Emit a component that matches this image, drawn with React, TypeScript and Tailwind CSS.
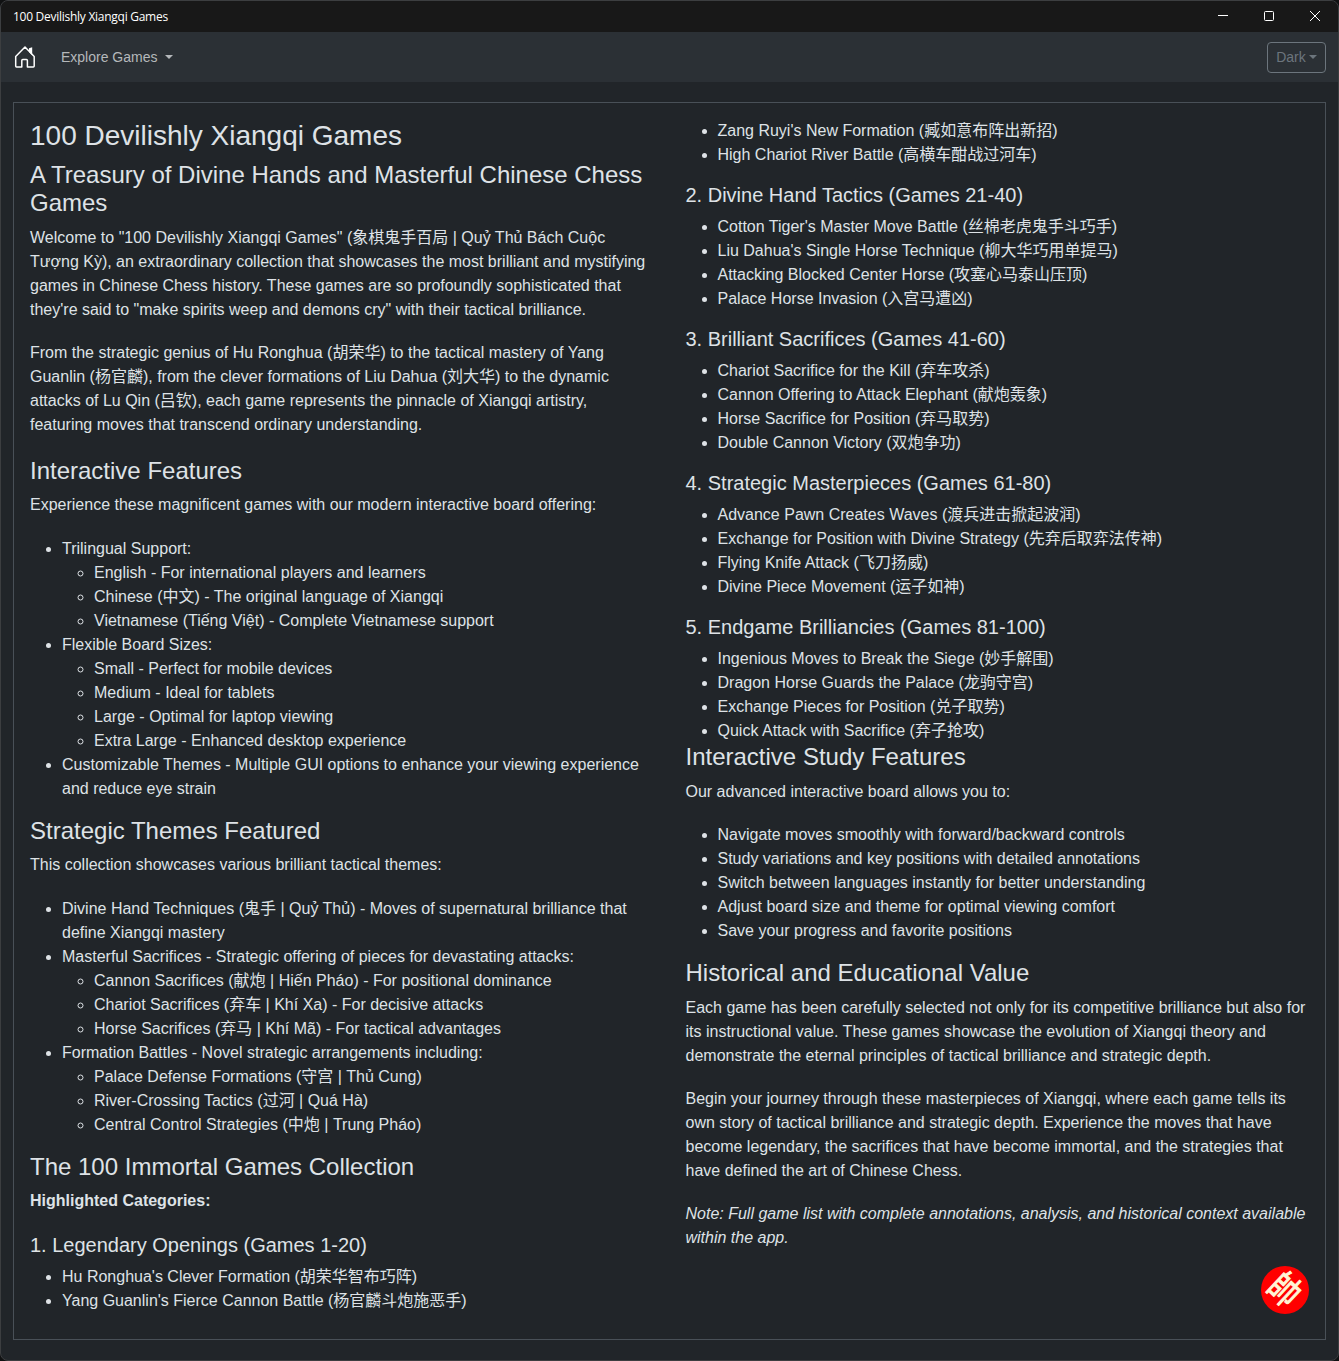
import type { ReactNode } from "react";

type Item = string | { text: string; children: string[] };

function H3({ children, className = "" }: { children: ReactNode; className?: string }) {
  return <h3 className={`mb-2 text-[24px] leading-[28.8px] ${className}`}>{children}</h3>;
}

function H4({ children }: { children: ReactNode }) {
  return <h4 className="mb-2 text-[20px] leading-6">{children}</h4>;
}

function P({ children }: { children: ReactNode }) {
  return <p className="mb-[19.2px]">{children}</p>;
}

function List({ items, className = "mb-4" }: { items: Item[]; className?: string }) {
  return (
    <ul className={`list-disc pl-8 ${className}`}>
      {items.map((item) =>
        typeof item === "string" ? (
          <li key={item}>{item}</li>
        ) : (
          <li key={item.text}>
            {item.text}
            <ul className="list-[circle] pl-8">
              {item.children.map((child) => (
                <li key={child}>{child}</li>
              ))}
            </ul>
          </li>
        ),
      )}
    </ul>
  );
}

function Caret({ className = "" }: { className?: string }) {
  return (
    <span
      className={`inline-block border-x-[4px] border-t-[4px] border-x-transparent border-t-current ${className}`}
    />
  );
}

function TitleBar() {
  return (
    <header className="flex h-8 items-center justify-between bg-[#181818] pr-[18px] pl-3 text-white">
      <span className="pt-px font-['Open_Sans','Noto_Sans',sans-serif] text-[12px] leading-4 tracking-[-0.27px]">
        100 Devilishly Xiangqi Games
      </span>
      <div className="flex items-center gap-9">
        <svg width="10" height="10" viewBox="0 0 10 10" stroke="currentColor">
          <path d="M0 4.5h10" />
        </svg>
        <svg width="10" height="10" viewBox="0 0 10 10" fill="none" stroke="currentColor">
          <rect x="0.5" y="0.5" width="9" height="9" rx="1" />
        </svg>
        <svg width="10" height="10" viewBox="0 0 10 10" stroke="currentColor">
          <path d="M0 0l10 10M10 0L0 10" />
        </svg>
      </div>
    </header>
  );
}

function NavBar() {
  return (
    <nav className="flex h-[50px] items-center bg-[#2b3035] pr-3 pl-3 text-[14px]">
      <svg
        width="24"
        height="24"
        viewBox="0 0 24 24"
        fill="none"
        stroke="#fff"
        strokeWidth="1.5"
        strokeLinejoin="round"
        strokeLinecap="round"
      >
        <path d="M2.7 11.5V21.1a.8.8 0 0 0 .8.8h5.3v-6.5a1 1 0 0 1 1-1h3.6a1 1 0 0 1 1 1v6.5h6a.8.8 0 0 0 .8-.8V11.5L12 2z" />
        <path d="M16 3.3l3.2-1v8l-3.2-3.4z" fill="#fff" stroke="none" />
      </svg>
      <button className="ml-6 flex items-center text-[#b5b8bb]">
        Explore Games
        <Caret className="ml-2" />
      </button>
      <button className="ml-auto flex h-[31px] w-[59px] items-center justify-center rounded-[4px] border border-[#6c757d] text-[14px] text-[#6c757d]">
        Dark
        <Caret className="ml-[3px]" />
      </button>
    </nav>
  );
}

const interactiveFeatures: Item[] = [
  {
    text: "Trilingual Support:",
    children: [
      "English - For international players and learners",
      "Chinese (中文) - The original language of Xiangqi",
      "Vietnamese (Tiếng Việt) - Complete Vietnamese support",
    ],
  },
  {
    text: "Flexible Board Sizes:",
    children: [
      "Small - Perfect for mobile devices",
      "Medium - Ideal for tablets",
      "Large - Optimal for laptop viewing",
      "Extra Large - Enhanced desktop experience",
    ],
  },
  "Customizable Themes - Multiple GUI options to enhance your viewing experience and reduce eye strain",
];

const themes: Item[] = [
  "Divine Hand Techniques (鬼手 | Quỷ Thủ) - Moves of supernatural brilliance that define Xiangqi mastery",
  {
    text: "Masterful Sacrifices - Strategic offering of pieces for devastating attacks:",
    children: [
      "Cannon Sacrifices (献炮 | Hiến Pháo) - For positional dominance",
      "Chariot Sacrifices (弃车 | Khí Xa) - For decisive attacks",
      "Horse Sacrifices (弃马 | Khí Mã) - For tactical advantages",
    ],
  },
  {
    text: "Formation Battles - Novel strategic arrangements including:",
    children: [
      "Palace Defense Formations (守宫 | Thủ Cung)",
      "River-Crossing Tactics (过河 | Quá Hà)",
      "Central Control Strategies (中炮 | Trung Pháo)",
    ],
  },
];

const categories = [
  {
    title: "2. Divine Hand Tactics (Games 21-40)",
    items: [
      "Cotton Tiger's Master Move Battle (丝棉老虎鬼手斗巧手)",
      "Liu Dahua's Single Horse Technique (柳大华巧用单提马)",
      "Attacking Blocked Center Horse (攻塞心马泰山压顶)",
      "Palace Horse Invasion (入宫马遭凶)",
    ],
  },
  {
    title: "3. Brilliant Sacrifices (Games 41-60)",
    items: [
      "Chariot Sacrifice for the Kill (弃车攻杀)",
      "Cannon Offering to Attack Elephant (献炮轰象)",
      "Horse Sacrifice for Position (弃马取势)",
      "Double Cannon Victory (双炮争功)",
    ],
  },
  {
    title: "4. Strategic Masterpieces (Games 61-80)",
    items: [
      "Advance Pawn Creates Waves (渡兵进击掀起波润)",
      "Exchange for Position with Divine Strategy (先弃后取弈法传神)",
      "Flying Knife Attack (飞刀扬威)",
      "Divine Piece Movement (运子如神)",
    ],
  },
  {
    title: "5. Endgame Brilliancies (Games 81-100)",
    items: [
      "Ingenious Moves to Break the Siege (妙手解围)",
      "Dragon Horse Guards the Palace (龙驹守宫)",
      "Exchange Pieces for Position (兑子取势)",
      "Quick Attack with Sacrifice (弃子抢攻)",
    ],
  },
];

export default function App() {
  return (
    <div className="h-[1361px] w-[1339px] bg-[#101112]">
      <div className="relative h-full overflow-hidden rounded-[8px] border border-[#3c3e40] bg-[#212529] font-['Liberation_Sans','Noto_Sans_CJK_SC',sans-serif] text-[16px] leading-6 text-[#dee2e6]">
        <div className="-mt-px">
          <TitleBar />
          <NavBar />
        </div>
        <main className="mx-3 mt-5 grid h-[1238px] grid-cols-2 gap-8 border border-[#495057] p-4">
          <section>
            <h1 className="mb-2 text-[28px] leading-[33.6px]">100 Devilishly Xiangqi Games</h1>
            <H3>A Treasury of Divine Hands and Masterful Chinese Chess Games</H3>
            <P>
              Welcome to "100 Devilishly Xiangqi Games" (象棋鬼手百局 | Quỷ Thủ Bách Cuộc Tượng Kỳ), an
              extraordinary collection that showcases the most brilliant and mystifying games in Chinese
              Chess history. These games are so profoundly sophisticated that they're said to "make
              spirits weep and demons cry" with their tactical brilliance.
            </P>
            <P>
              From the strategic genius of Hu Ronghua (胡荣华) to the tactical mastery of Yang Guanlin
              (杨官麟), from the clever formations of Liu Dahua (刘大华) to the dynamic attacks of Lu Qin
              (吕钦), each game represents the pinnacle of Xiangqi artistry, featuring moves that
              transcend ordinary understanding.
            </P>
            <H3>Interactive Features</H3>
            <P>Experience these magnificent games with our modern interactive board offering:</P>
            <List items={interactiveFeatures} />
            <H3>Strategic Themes Featured</H3>
            <P>This collection showcases various brilliant tactical themes:</P>
            <List items={themes} />
            <H3>The 100 Immortal Games Collection</H3>
            <P>
              <strong>Highlighted Categories:</strong>
            </P>
            <H4>1. Legendary Openings (Games 1-20)</H4>
            <List
              items={[
                "Hu Ronghua's Clever Formation (胡荣华智布巧阵)",
                "Yang Guanlin's Fierce Cannon Battle (杨官麟斗炮施恶手)",
              ]}
            />
          </section>
          <section>
            <List
              items={[
                "Zang Ruyi's New Formation (臧如意布阵出新招)",
                "High Chariot River Battle (高横车酣战过河车)",
              ]}
            />
            {categories.map((category, i) => (
              <div key={category.title}>
                <H4>{category.title}</H4>
                <List items={category.items} className={i === categories.length - 1 ? "" : "mb-4"} />
              </div>
            ))}
            <H3>Interactive Study Features</H3>
            <P>Our advanced interactive board allows you to:</P>
            <List
              items={[
                "Navigate moves smoothly with forward/backward controls",
                "Study variations and key positions with detailed annotations",
                "Switch between languages instantly for better understanding",
                "Adjust board size and theme for optimal viewing comfort",
                "Save your progress and favorite positions",
              ]}
            />
            <H3>Historical and Educational Value</H3>
            <P>
              Each game has been carefully selected not only for its competitive brilliance but also for
              its instructional value. These games showcase the evolution of Xiangqi theory and
              demonstrate the eternal principles of tactical brilliance and strategic depth.
            </P>
            <P>
              Begin your journey through these masterpieces of Xiangqi, where each game tells its own
              story of tactical brilliance and strategic depth. Experience the moves that have become
              legendary, the sacrifices that have become immortal, and the strategies that have defined
              the art of Chinese Chess.
            </P>
            <P>
              <em>
                Note: Full game list with complete annotations, analysis, and historical context
                available within the app.
              </em>
            </P>
          </section>
        </main>
        <svg className="absolute right-[29px] bottom-[46px] size-12 overflow-visible" viewBox="0 0 48 48">
          <circle cx="24" cy="24" r="24" fill="#ff0000" />
          <text
            x="0"
            y="11.5"
            textAnchor="middle"
            transform="translate(24 23.5) rotate(43) scale(0.94 1.16)"
            textRendering="geometricPrecision"
            fill="#fff5d6"
            stroke="#fff5d6"
            strokeWidth="0.9"
            className="font-['Noto_Sans_CJK_TC',sans-serif] text-[31px]"
          >
            帥
          </text>
        </svg>
      </div>
    </div>
  );
}
